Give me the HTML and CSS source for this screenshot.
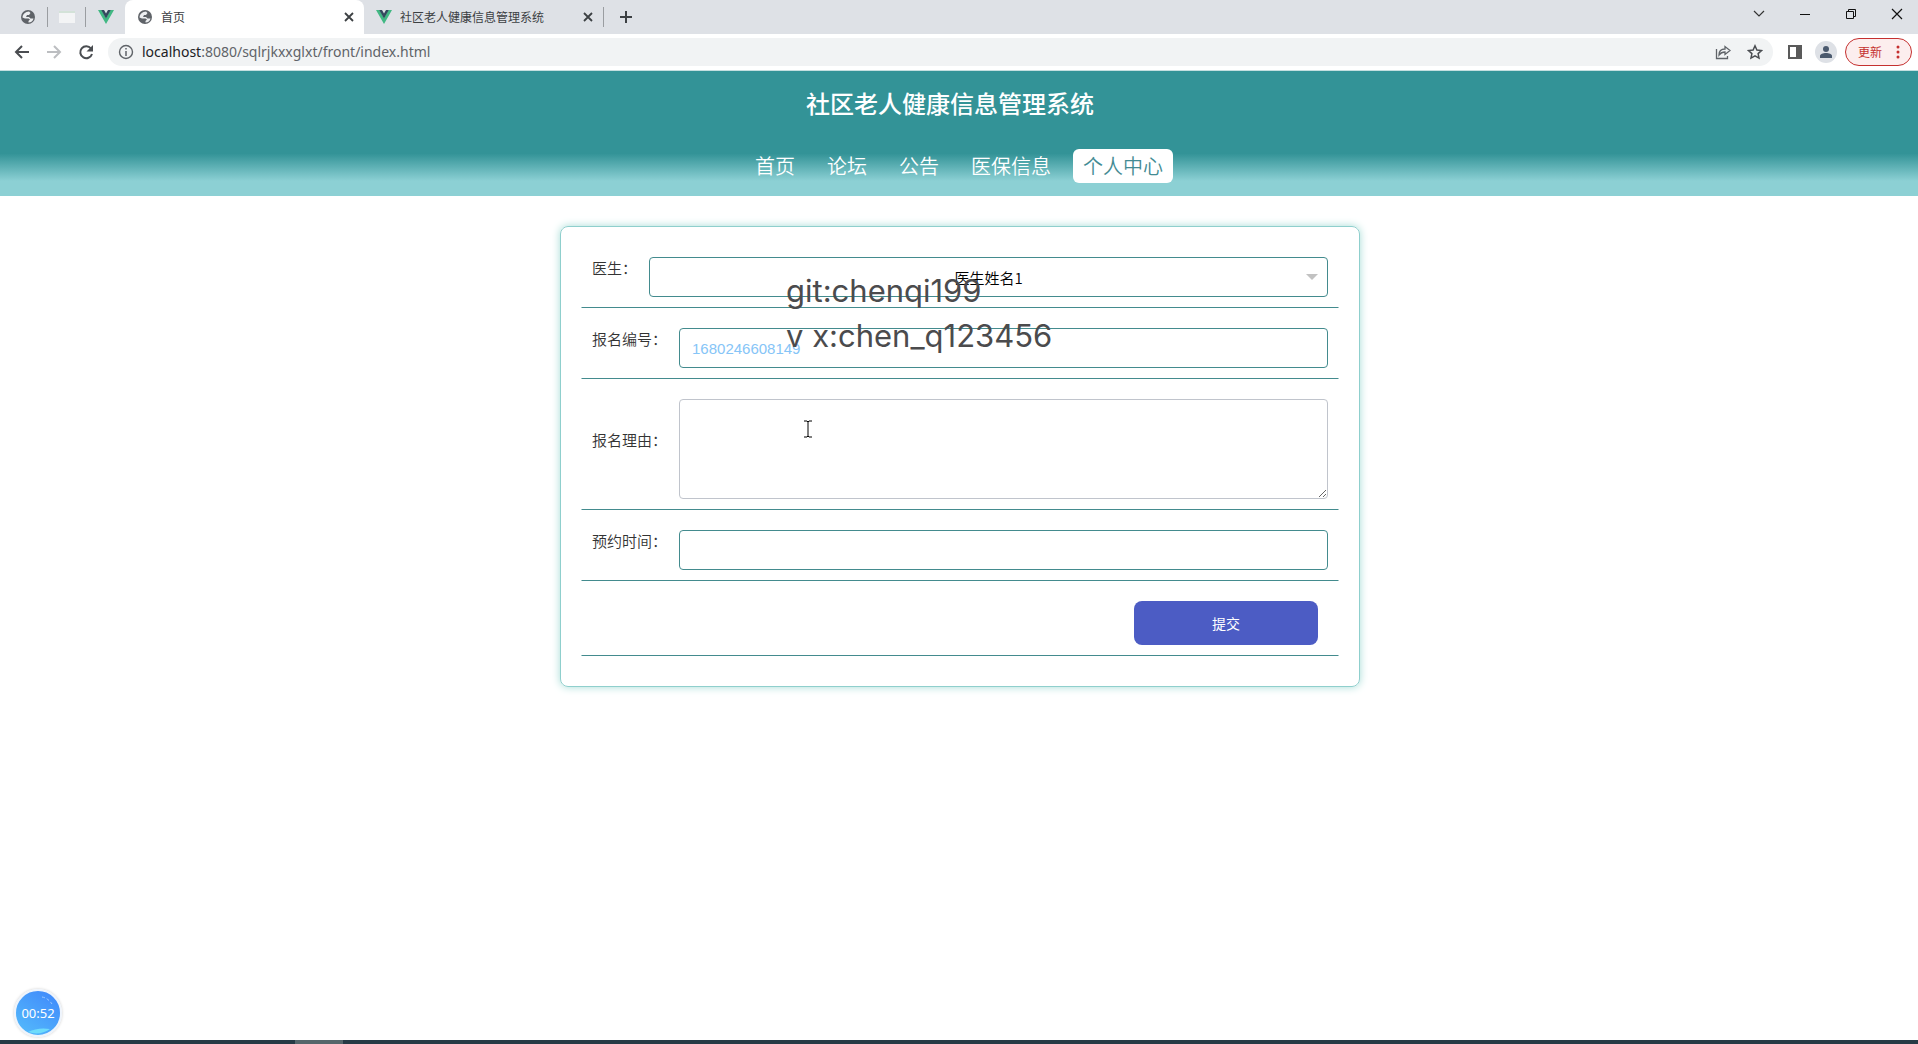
FILE: index.html
```html
<!DOCTYPE html>
<html lang="zh-CN">
<head>
<meta charset="utf-8">
<title>首页</title>
<link rel="stylesheet" href="styles.css">
</head>
<body>
<svg class="defs" aria-hidden="true">
  <symbol id="globe" viewBox="0 0 16 16"><circle cx="8" cy="8" r="7" fill="#5f6368"/><path d="M2.500 8.500C2.500 6 4 4 6.500 3L9 2.500 10.500 4 9 6H7L6 8h3l1.500 1.500h3C13 12 11 13.500 8.500 13.600V12L10 10.500 8.500 9.500H5z" fill="#eceef0"/></symbol>
  <symbol id="vue" viewBox="0 0 16 16"><path d="M0 1h3.500L8 9l4.500-8H16L8 15z" fill="#41b883"/><path d="M3.200 1H6l2 3.500L10 1h2.800L8 9.500z" fill="#35495e"/></symbol>
  <symbol id="close" viewBox="0 0 16 16"><path d="m4 4 8 8m0-8-8 8" stroke="#3c4043" stroke-width="1.800"/></symbol>
</svg>
<div class="window">
  <div class="tabstrip">
    <span class="pinned"><svg class="ico"><use href="#globe"/></svg></span>
    <span class="pinned ruled"><svg class="ico" viewBox="0 0 16 16"><path d="M0 2h16v12H0z" fill="#f3f4f5"/><path d="M0 2h16v2H0z" fill="#d3e2d8"/></svg></span>
    <span class="pinned"><svg class="ico"><use href="#vue"/></svg></span>
    <div class="tab active"><svg class="ico"><use href="#globe"/></svg><span class="tab-name">首页</span><button aria-label="关闭"><svg class="ico"><use href="#close"/></svg></button></div>
    <div class="tab"><svg class="ico"><use href="#vue"/></svg><span class="tab-name">社区老人健康信息管理系统</span><button aria-label="关闭"><svg class="ico"><use href="#close"/></svg></button></div>
    <button class="newtab" aria-label="新标签页"><svg class="ico" viewBox="0 0 16 16"><path d="M8 2v12M2 8h12" stroke="#3c4043" stroke-width="2"/></svg></button>
    <div class="controls">
      <button aria-label="搜索标签页"><svg class="ico" viewBox="0 0 16 16"><path d="m3 5 5 5 5-5" fill="none" stroke="#333" stroke-width="1.200"/></svg></button>
      <button aria-label="最小化"><svg class="ico" viewBox="0 0 16 16"><path d="M3 8.500h10" stroke="#111"/></svg></button>
      <button aria-label="还原"><svg class="ico" viewBox="0 0 16 16"><path d="M3.500 5.500h7v7h-7zM5.500 5V3.500h7v7H11" fill="none" stroke="#111"/></svg></button>
      <button aria-label="关闭窗口"><svg class="ico" viewBox="0 0 16 16"><path d="m3 3 10 10m0-10L3 13" stroke="#111" stroke-width="1.200"/></svg></button>
    </div>
  </div>
  <div class="toolbar">
    <div class="history">
      <button aria-label="后退"><svg class="ico" viewBox="0 0 16 16"><path d="M15 8H2m6-6L2 8l6 6" fill="none" stroke="#4a4d51" stroke-width="2"/></svg></button>
      <button aria-label="前进"><svg class="ico" viewBox="0 0 16 16"><path d="M1 8h13M8 2l6 6-6 6" fill="none" stroke="#bcbec1" stroke-width="2"/></svg></button>
      <button aria-label="刷新"><svg class="ico" viewBox="0 0 16 16"><path d="M13 4.500A6 6 0 1 0 14 10" fill="none" stroke="#4a4d51" stroke-width="2"/><path d="M15 1v6.500H8.500z" fill="#4a4d51"/></svg></button>
    </div>
    <div class="omnibox">
      <svg class="ico" viewBox="0 0 16 16"><circle cx="8" cy="8" r="6.500" fill="none" stroke="#5f6368" stroke-width="1.400"/><path d="M8 7v5M8 4v1.600" stroke="#5f6368" stroke-width="1.500"/></svg>
      <span class="url"><b>localhost</b>:8080/sqlrjkxxglxt/front/index.html</span>
      <div class="page-actions">
        <button aria-label="分享"><svg class="ico" viewBox="0 0 16 16"><path d="M1.500 5v9.500h11V12M4 11c0-4 2.500-6 6-6V2.500l5 4-5 4V8C7.500 8 5.500 9 4 11z" fill="none" stroke="#5f6368" stroke-width="1.300"/></svg></button>
        <button aria-label="收藏"><svg class="ico" viewBox="0 0 16 16"><path d="m8 1.800 1.900 4.200 4.600.5-3.400 3.100.9 4.500L8 11.800l-4 2.300.9-4.500L1.500 6.500l4.600-.5z" fill="none" stroke="#4a4d51" stroke-width="1.500"/></svg></button>
      </div>
    </div>
    <div class="tools">
      <button class="panel" aria-label="侧边栏"><svg class="ico" viewBox="0 0 16 16"><path d="M1 1h14v14H1zm2 2v10h6V3z" fill="#5a5a5a" fill-rule="evenodd"/></svg></button>
      <button class="avatar" aria-label="用户"><svg class="ico" viewBox="0 0 16 16"><circle cx="8" cy="5" r="3" fill="#4b5a6e"/><path d="M2 14v-2c0-4 12-4 12 0v2z" fill="#4b5a6e"/></svg></button>
      <button class="update">更新<svg viewBox="0 0 4 16"><circle cx="2" cy="3" r="1.500"/><circle cx="2" cy="8" r="1.500"/><circle cx="2" cy="13" r="1.500"/></svg></button>
    </div>
  </div>
  <header class="site-header">
    <h1>社区老人健康信息管理系统</h1>
    <nav>
      <a href="#">首页</a><a href="#">论坛</a><a href="#">公告</a><a href="#">医保信息</a><a href="#" class="current">个人中心</a>
    </nav>
  </header>
  <main>
    <form class="card">
      <div class="row"><label for="doctor">医生：</label><div class="select"><select id="doctor"><option>医生姓名1</option></select></div></div>
      <div class="row"><label for="number">报名编号：</label><input id="number" type="text" value="1680246608149"></div>
      <div class="row"><label for="reason">报名理由：</label><textarea id="reason"></textarea></div>
      <div class="row"><label for="time">预约时间：</label><input id="time" type="text"></div>
      <div class="row actions"><button type="button">提交</button></div>
    </form>
  </main>
  <footer class="taskbar"><span></span></footer>
  <div class="watermark"><p>git:chenqi199</p><p>v x:chen_q123456</p></div>
  <svg class="cursor" viewBox="0 0 8 18"><path d="M0 1h3l1 1 1-1h3M4 2v14M0 17h3l1-1 1 1h3" fill="none" stroke="#000"/></svg>
  <div class="timer"><svg viewBox="0 0 44 44"><path d="M12 41q10-5 22-3-10 7-22 3z" fill="#6fdcfb"/><path d="M26 6q6 1 10 7" fill="none" stroke="#9cc8ff" stroke-dasharray="3 2"/></svg><span>00:52</span></div>
</div>
</body>
</html>
```

FILE: styles.css
```css
* { box-sizing: border-box; }
body { margin: 0; background: #fff; color: #333; font-family: "Noto Sans", "Noto Sans CJK SC", sans-serif; }
button { margin: 0; padding: 0; border: 0; background: none; font: inherit; color: inherit; }
p, h1 { margin: 0; }
.defs { position: absolute; width: 0; height: 0; }
.ico { display: block; flex: none; width: 16px; height: 16px; }
.window { position: relative; display: flex; flex-direction: column; min-height: 100vh; overflow: hidden; }

.tabstrip { display: flex; align-items: center; height: 34px; padding-left: 8px; background: #dee1e6; font-size: 12px; }
.pinned { display: flex; justify-content: center; align-items: center; width: 39px; height: 20px; }
.pinned.ruled { border: solid #9a9da1; border-width: 0 1px; }
.tab { display: flex; align-items: center; gap: 8px; width: 239px; height: 34px; padding: 0 7px 0 12px; }
.tab.active { background: #fff; border-radius: 8px 8px 0 0; }
.tab-name { flex: 1; white-space: nowrap; color: #3c4043; }
.newtab { display: flex; align-items: center; height: 20px; padding-left: 14px; border-left: 1px solid #9a9da1; }
.controls { display: flex; gap: 30px; margin-left: auto; padding: 0 13px 6px 0; }

.toolbar { display: flex; align-items: center; height: 37px; padding: 0 6px 0 14px; border-bottom: 1px solid #c4dfe0; background: #fff; }
.history { display: flex; gap: 16px; padding-right: 14px; }
.omnibox { flex: 1; display: flex; align-items: center; gap: 8px; height: 28px; padding: 0 10px; border-radius: 14px; background: #f1f3f4; font-size: 14px; }
.url { flex: 1; color: #5f6368; line-height: 20px; }
.url b { font-weight: 400; color: #202124; }
.page-actions { display: flex; gap: 16px; }
.tools { display: flex; align-items: center; gap: 8px; padding-left: 10px; }
.panel { padding: 0 4px; }
.avatar { display: flex; align-items: center; justify-content: center; width: 22px; height: 22px; border-radius: 50%; background: #dee1e6; }
.update { display: flex; align-items: center; justify-content: space-between; width: 67px; height: 28px; padding: 0 11px 0 12px; border: 1px solid #c5302f; border-radius: 14px; background: #fceeee; color: #c5302f; font-size: 12px; }
.update svg { width: 4px; height: 16px; fill: #c5302f; }

.site-header { display: flex; flex-direction: column; align-items: center; gap: 27px; height: 125px; padding-top: 15px; background: linear-gradient(#339397 66%, #8cd0d4 88%); color: #fff; }
.site-header h1 { padding-right: 18px; font-size: 24px; line-height: 36px; font-weight: 500; }
nav { display: flex; gap: 12px; }
nav a { padding: 0 10px; border-radius: 6px; color: #fff; font-size: 20px; font-weight: 350; line-height: 34px; text-decoration: none; font-family: "Noto Sans CJK SC", sans-serif; }
nav a.current { background: #fff; color: #438b93; }

main { flex: 1; display: flex; justify-content: center; align-items: flex-start; padding: 30px 0 30px 2px; }
.card { width: 800px; max-width: 100%; padding: 20px; border: 1px solid #8fcfcd; border-radius: 8px; box-shadow: 0 0 8px #a5dcd6; }
.row { display: flex; align-items: center; gap: 12px; padding: 10px; margin-bottom: 10px; border: solid transparent; border-width: 0 1px 1px; border-bottom-color: #438b8e; }
label { flex: none; padding-bottom: 18px; font-family: "Noto Sans CJK SC", sans-serif; font-size: 15px; font-weight: 350; line-height: 22px; }
input, select, textarea { display: block; flex: 1; min-width: 0; width: 100%; height: 40px; margin: 0; padding: 0 12px; border: 1px solid #438b8e; border-radius: 4px; background: #fff; outline: 0; font: 15px "Liberation Sans", "Noto Sans CJK SC", sans-serif; color: #86c5f7; }
.select { position: relative; flex: 1; }
.select::after { content: ""; position: absolute; right: 10px; top: 17px; border: solid transparent; border-width: 6px 6px 0; border-top-color: #c2c2c2; }
select { appearance: none; color: #000; font-family: "Noto Sans CJK SC", sans-serif; font-weight: 350; text-align-last: center; padding: 0 22px; }
textarea { height: 100px; border-color: #c0c4cc; resize: vertical; }
.actions { justify-content: flex-end; }
.actions button { width: 184px; height: 44px; margin-right: 10px; border-radius: 8px; background: #4c5cc4; color: #fff; font-size: 14px; }

.taskbar { height: 4px; padding-left: 295px; background: #263a45; }
.taskbar span { display: block; width: 48px; height: 4px; background: #55666b; }
.watermark { position: absolute; left: 786px; top: 268px; color: #4b4b4d; font: 400 31px/45px Inter, sans-serif; pointer-events: none; white-space: nowrap; }
.cursor { position: absolute; left: 804px; top: 420px; width: 8px; height: 18px; }
.timer { position: absolute; left: 14px; bottom: 7px; width: 48px; height: 48px; border: 2px solid #eef4fc; border-radius: 50%; background: linear-gradient(35deg, #55bdfb, #3f86fb); box-shadow: 0 0 3px #ccc; color: #fff; font-size: 13px; line-height: 44px; text-align: center; }
.timer svg { position: absolute; left: 0; top: 0; width: 44px; height: 44px; }
.timer span { position: relative; }
```
